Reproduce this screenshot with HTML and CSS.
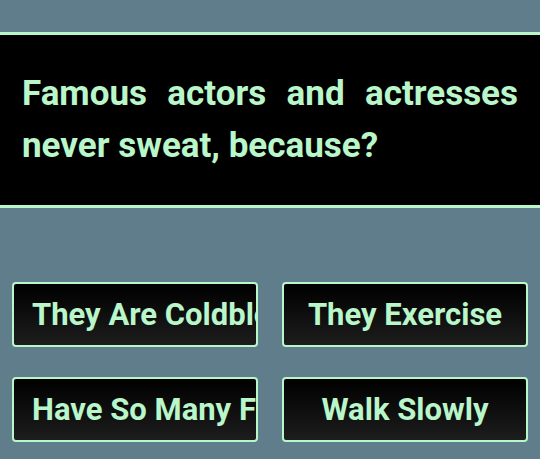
FILE: index.html
```html
<!DOCTYPE html>
<html lang="en">
<head>
<meta charset="utf-8">
<title>Quiz</title>
<link rel="stylesheet" href="styles.css">
</head>
<body>
<main class="screen">
  <section class="question">
    <p class="question-text">Famous actors and actresses never sweat, because?</p>
  </section>
  <section class="answers">
    <button class="answer">They Are Coldblooded</button>
    <button class="answer">They Exercise</button>
    <button class="answer">Have So Many Fans</button>
    <button class="answer">Walk Slowly</button>
  </section>
</main>
</body>
</html>
```

FILE: styles.css
```css
html, body {
  margin: 0;
  padding: 0;
  background: #607d8b;
}
body {
  width: 540px;
  height: 459px;
  overflow: hidden;
  font-family: Roboto, "Liberation Sans", sans-serif;
}
.screen {
  display: flex;
  flex-direction: column;
  padding-top: 32px;
}
.question {
  background: #000;
  border-top: 3px solid #b9f6ca;
  border-bottom: 3px solid #b9f6ca;
  padding: 33px 22px 33px 22px;
  height: 104px;
}
.question-text {
  margin: 0;
  color: #b9f6ca;
  font-size: 35px;
  font-weight: 700;
  line-height: 52px;
  text-align: justify;
}
.answers {
  display: grid;
  grid-template-columns: 246px 246px;
  column-gap: 24px;
  row-gap: 30px;
  padding: 74px 12px 0 12px;
}
.answer {
  height: 65px;
  box-sizing: border-box;
  border: 2px solid #b9f6ca;
  border-radius: 4px;
  background: linear-gradient(#000 0%, #1d1d1d 100%);
  color: #b9f6ca;
  font-family: Roboto, "Liberation Sans", sans-serif;
  font-size: 31px;
  font-weight: 700;
  white-space: nowrap;
  overflow: hidden;
  text-align: center;
  padding: 0 18px;
  margin: 0;
  display: block;
  line-height: 61px;
}
```
